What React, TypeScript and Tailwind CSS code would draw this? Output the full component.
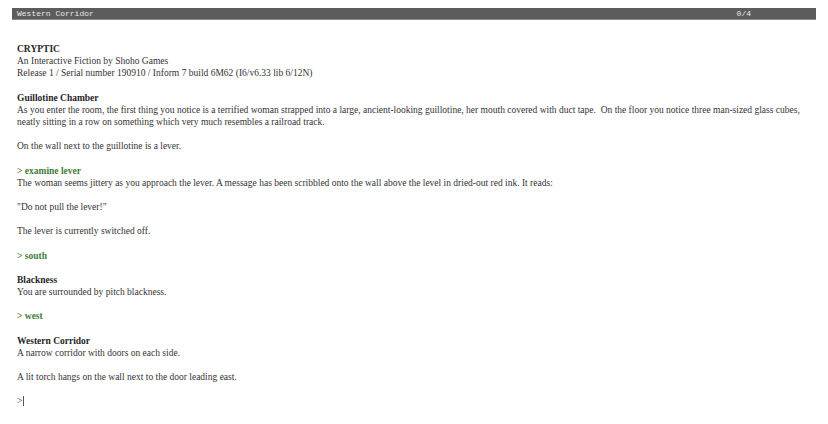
import React from "react";

type Block =
  | { kind: "title"; text: string }
  | { kind: "text"; text: string }
  | { kind: "cmd"; text: string }
  | { kind: "gap" };

const story: Block[] = [
  { kind: "title", text: "CRYPTIC" },
  { kind: "text", text: "An Interactive Fiction by Shoho Games" },
  {
    kind: "text",
    text: "Release 1 / Serial number 190910 / Inform 7 build 6M62 (I6/v6.33 lib 6/12N)",
  },
  { kind: "gap" },
  { kind: "title", text: "Guillotine Chamber" },
  {
    kind: "text",
    text: "As you enter the room, the first thing you notice is a terrified woman strapped into a large, ancient-looking guillotine, her mouth covered with duct tape.  On the floor you notice three man-sized glass cubes, neatly sitting in a row on something which very much resembles a railroad track.",
  },
  { kind: "gap" },
  { kind: "text", text: "On the wall next to the guillotine is a lever." },
  { kind: "gap" },
  { kind: "cmd", text: "> examine lever" },
  {
    kind: "text",
    text: "The woman seems jittery as you approach the lever. A message has been scribbled onto the wall above the level in dried-out red ink. It reads:",
  },
  { kind: "gap" },
  { kind: "text", text: "\"Do not pull the lever!\"" },
  { kind: "gap" },
  { kind: "text", text: "The lever is currently switched off." },
  { kind: "gap" },
  { kind: "cmd", text: "> south" },
  { kind: "gap" },
  { kind: "title", text: "Blackness" },
  { kind: "text", text: "You are surrounded by pitch blackness." },
  { kind: "gap" },
  { kind: "cmd", text: "> west" },
  { kind: "gap" },
  { kind: "title", text: "Western Corridor" },
  { kind: "text", text: "A narrow corridor with doors on each side." },
  { kind: "gap" },
  { kind: "text", text: "A lit torch hangs on the wall next to the door leading east." },
  { kind: "gap" },
];

const App: React.FC = () => {
  return (
    <div className="min-h-screen bg-white px-3 pt-2">
      {/* status line */}
      <div className="flex h-[12px] items-center justify-between bg-[#5c5c5c] border-b border-[#8a8a8a] pl-[5px] pr-[65px] font-['Liberation_Mono',monospace] text-[8px] leading-[12px] text-[#e8e8e8]">
        <span>Western Corridor</span>
        <span>0/4</span>
      </div>

      {/* transcript */}
      <div className="pl-[5px] pr-[2px] pt-[23px] font-['Liberation_Serif',serif] text-[9.5px] leading-[12.15px] text-[#333] whitespace-pre-wrap">
        {story.map((b, i) => {
          if (b.kind === "gap") return <div key={i} className="h-[12.15px]" />;
          if (b.kind === "title")
            return (
              <div key={i} className="font-bold text-[#262626]">
                {b.text}
              </div>
            );
          if (b.kind === "cmd")
            return (
              <div key={i} className="font-bold text-[#3f7d3a]">
                {b.text}
              </div>
            );
          return <div key={i}>{b.text}</div>;
        })}
        <div className="flex items-center">
          <span>&gt;</span>
          <span className="ml-[1px] inline-block h-[10px] w-[1px] bg-[#555]" />
        </div>
      </div>
    </div>
  );
};

export default App;
